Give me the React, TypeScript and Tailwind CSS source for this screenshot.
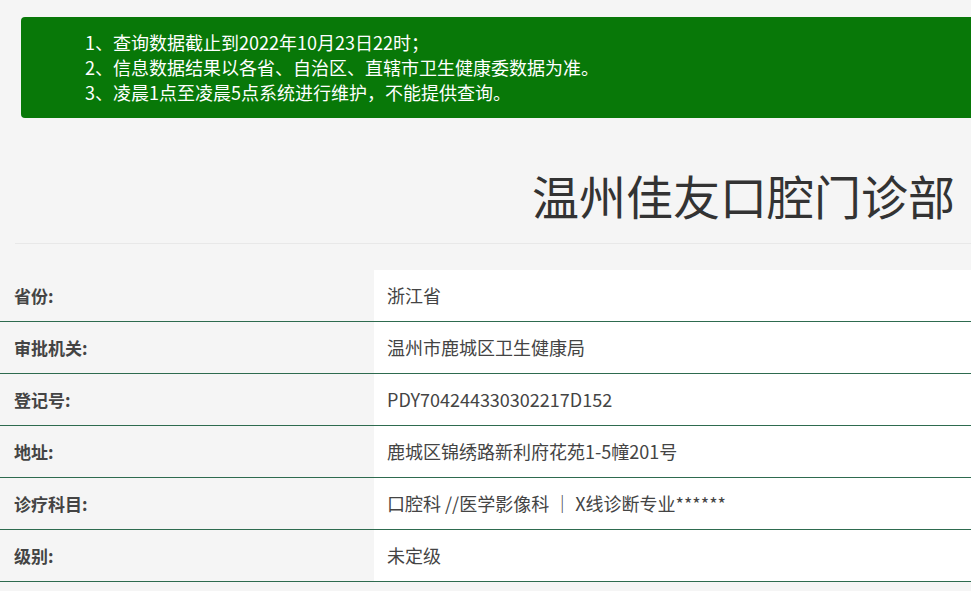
export default function App() {
  const rows = [
    ["省份:", "浙江省"],
    ["审批机关:", "温州市鹿城区卫生健康局"],
    ["登记号:", "PDY704244330302217D152"],
    ["地址:", "鹿城区锦绣路新利府花苑1-5幢201号"],
    ["诊疗科目:", "口腔科 //医学影像科 ｜ X线诊断专业******"],
    ["级别:", "未定级"],
  ];
  return (
    <div className="w-[971px] h-[591px] overflow-hidden bg-[#f5f5f5]" style={{ fontFamily: '"Microsoft YaHei","Noto Sans CJK SC",sans-serif' }}>
      <div className="pt-[17px] pl-[21px]">
        <div className="h-[101px] w-[970px] rounded-[4px] bg-[#087808] text-white text-[18px] leading-[25px] pl-[64px] pt-[13px]">
          <div>1、查询数据截止到2022年10月23日22时；</div>
          <div>2、信息数据结果以各省、自治区、直辖市卫生健康委数据为准。</div>
          <div>3、凌晨1点至凌晨5点系统进行维护，不能提供查询。</div>
        </div>
      </div>
      <div className="h-[126px] ml-[15px] border-b border-[#e8e8e8] flex items-center justify-end pr-[16px]">
        <div className="text-[47px] text-[#333] pt-[30px]">温州佳友口腔门诊部</div>
      </div>
      <div className="mt-[26px]">
        {rows.map(([k, v]) => (
          <div key={k} className="flex h-[52px] border-b border-[#2e6b4f]">
            <div className="w-[374px] flex items-center pl-[14px] text-[17px] font-bold text-[#444]">{k}</div>
            <div className="flex-1 bg-white flex items-center pl-[13px] text-[18px] text-[#444]">{v}</div>
          </div>
        ))}
      </div>
    </div>
  );
}
